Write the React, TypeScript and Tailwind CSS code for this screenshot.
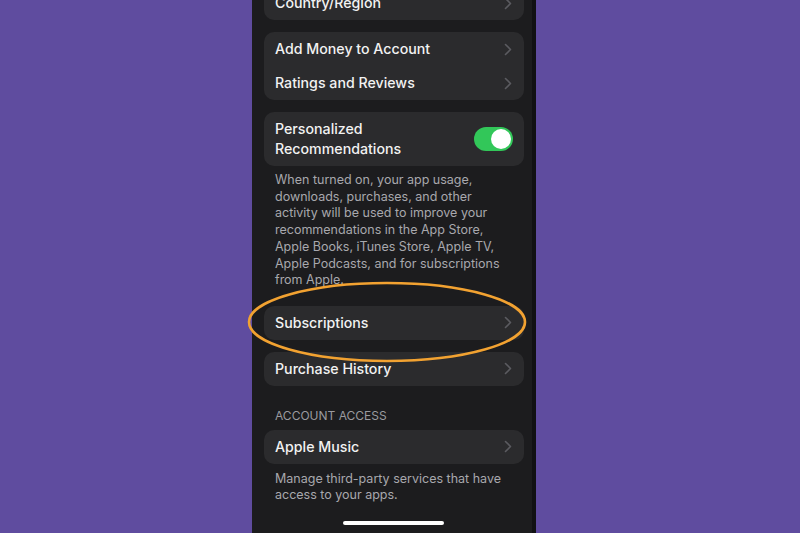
import React from "react";

const Chevron = () => (
  <svg width="8" height="13" viewBox="0 0 8 13" fill="none" className="shrink-0">
    <path d="M1.5 1.5 L6.5 6.5 L1.5 11.5" stroke="#5b5b60" strokeWidth="1.6" strokeLinecap="round" strokeLinejoin="round" />
  </svg>
);

const Row = ({ label }: { label: string }) => (
  <div className="flex h-[34px] items-center justify-between pl-[11px] pr-[12px]">
    <span className="text-[14.2px] font-medium text-[#f2f2f2]">{label}</span>
    <Chevron />
  </div>
);

const descLines = [
  "When turned on, your app usage,",
  "downloads, purchases, and other",
  "activity will be used to improve your",
  "recommendations in the App Store,",
  "Apple Books, iTunes Store, Apple TV,",
  "Apple Podcasts, and for subscriptions",
  "from Apple.",
];

export default function App() {
  return (
    <div
      className="flex h-[533px] w-[800px] justify-start overflow-hidden bg-[#5f4c9f]"
      style={{ fontFamily: "Inter, 'Noto Sans', sans-serif" }}
    >
      <div className="relative ml-[252px] flex h-full w-[284px] flex-col border-r-[4px] border-[#111113] bg-[#1c1c1e] pl-[12px] pr-[8px]">
        <div className="mt-[-14px] rounded-[10px] bg-[#2b2b2d]">
          <Row label="Country/Region" />
        </div>
        <div className="mt-[12px] rounded-[10px] bg-[#2b2b2d]">
          <Row label="Add Money to Account" />
          <Row label="Ratings and Reviews" />
        </div>
        <div className="mt-[12px] flex h-[54px] items-center justify-between rounded-[10px] bg-[#2b2b2d] pl-[11px] pr-[11px]">
          <span className="text-[14.2px] font-medium leading-[20px] text-[#f2f2f2]">
            Personalized
            <br />
            Recommendations
          </span>
          <div className="flex h-[24px] w-[39px] items-center justify-end rounded-full bg-[#32c759] p-[2px]">
            <div className="h-[20px] w-[20px] rounded-full bg-white" />
          </div>
        </div>
        <p className="mt-[6px] pl-[11px] text-[12.5px] leading-[16.7px] text-[#a8a8ad]">
          {descLines.map((l) => (
            <span key={l} className="block whitespace-nowrap">
              {l}
            </span>
          ))}
        </p>
        <div className="mt-[17px] rounded-[10px] bg-[#2b2b2d]">
          <Row label="Subscriptions" />
        </div>
        <div className="mt-[12px] rounded-[10px] bg-[#2b2b2d]">
          <Row label="Purchase History" />
        </div>
        <div className="mt-[22px] pl-[11px] text-[12px] uppercase leading-[16px] text-[#9a9a9f]">
          Account Access
        </div>
        <div className="mt-[6px] rounded-[10px] bg-[#2b2b2d]">
          <Row label="Apple Music" />
        </div>
        <p className="mt-[7px] pl-[11px] pr-[6px] text-[12.5px] leading-[16.5px] text-[#a8a8ad]">
          Manage third-party services that have access to your apps.
        </p>
        <div className="absolute bottom-[8px] left-[91px] h-[4px] w-[101px] rounded-full bg-white" />
        <svg
          className="pointer-events-none absolute left-[-6px] top-[280px]"
          width="284"
          height="86"
          viewBox="0 0 284 86"
          fill="none"
        >
          <ellipse cx="141" cy="42" rx="138" ry="39" stroke="#f2a231" strokeWidth="2.6" />
        </svg>
      </div>
    </div>
  );
}
